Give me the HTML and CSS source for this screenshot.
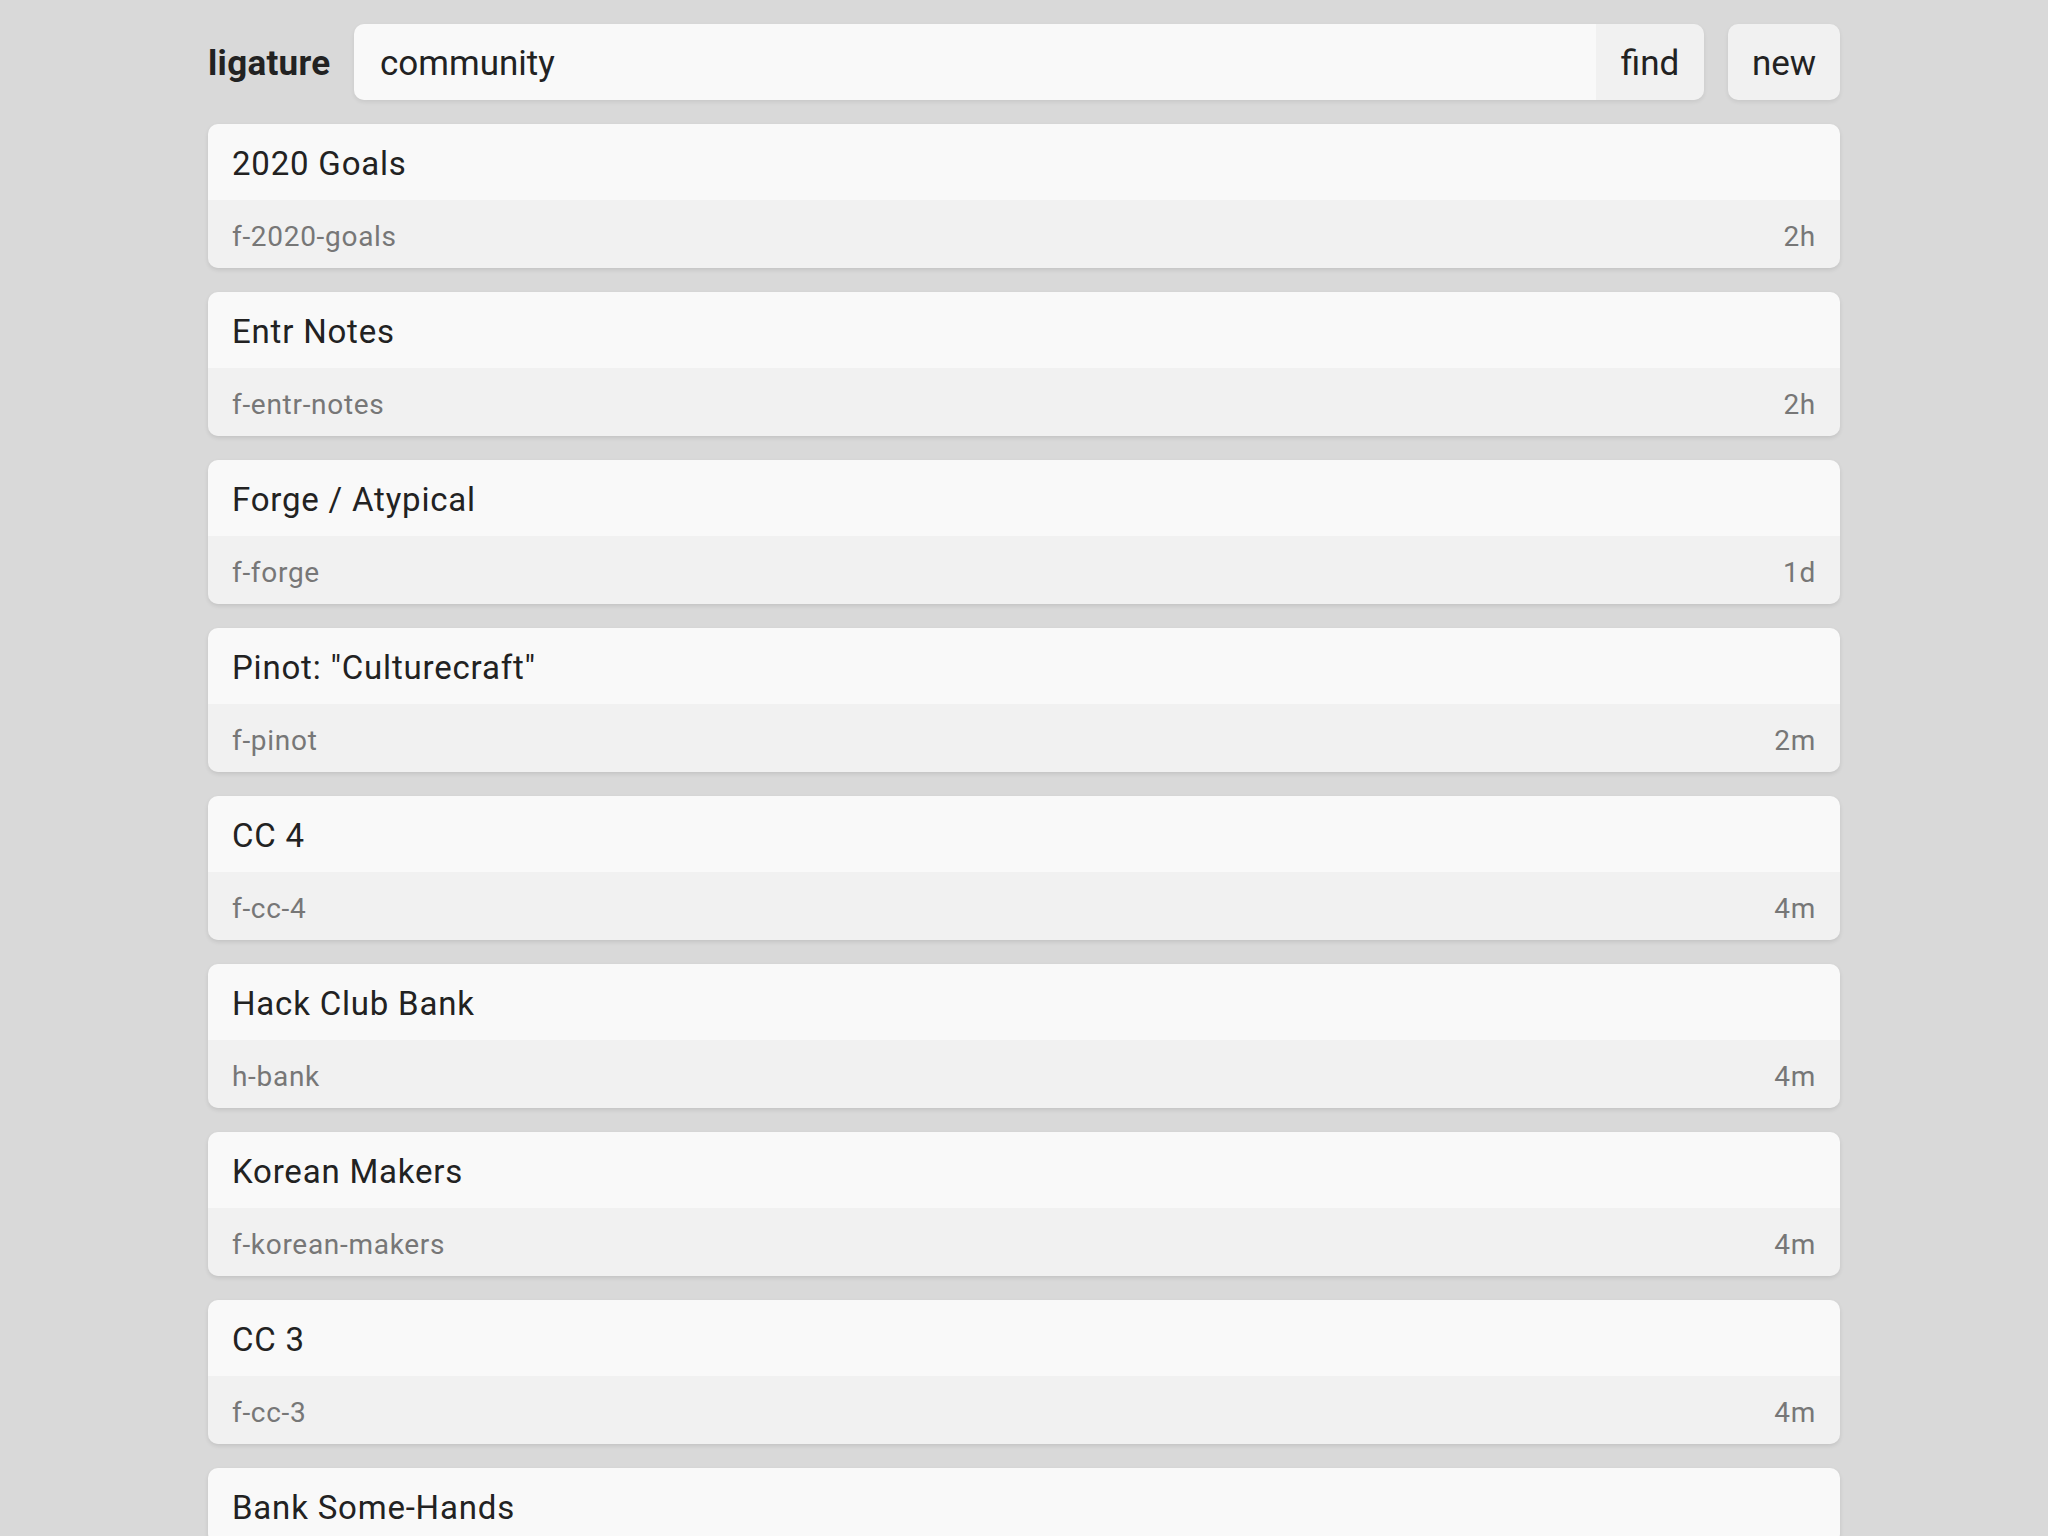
FILE: index.html
```html
<!DOCTYPE html>
<html lang="en">
<head>
<meta charset="utf-8">
<title>ligature</title>
<link rel="stylesheet" href="styles.css">
</head>
<body>
<div class="page">
  <header class="topbar">
    <div class="logo">ligature</div>
    <form class="search">
      <input class="search-input" type="text" value="community">
      <button class="search-btn" type="button">find</button>
    </form>
    <button class="new-btn" type="button">new</button>
  </header>
  <main class="list">
    <a class="card"><div class="card-title">2020 Goals</div><div class="card-meta"><span>f-2020-goals</span><span>2h</span></div></a>
    <a class="card"><div class="card-title">Entr Notes</div><div class="card-meta"><span>f-entr-notes</span><span>2h</span></div></a>
    <a class="card"><div class="card-title">Forge / Atypical</div><div class="card-meta"><span>f-forge</span><span>1d</span></div></a>
    <a class="card"><div class="card-title">Pinot: "Culturecraft"</div><div class="card-meta"><span>f-pinot</span><span>2m</span></div></a>
    <a class="card"><div class="card-title">CC 4</div><div class="card-meta"><span>f-cc-4</span><span>4m</span></div></a>
    <a class="card"><div class="card-title">Hack Club Bank</div><div class="card-meta"><span>h-bank</span><span>4m</span></div></a>
    <a class="card"><div class="card-title">Korean Makers</div><div class="card-meta"><span>f-korean-makers</span><span>4m</span></div></a>
    <a class="card"><div class="card-title">CC 3</div><div class="card-meta"><span>f-cc-3</span><span>4m</span></div></a>
    <a class="card"><div class="card-title">Bank Some-Hands</div></a>
  </main>
</div>
</body>
</html>
```
FILE: styles.css
```css
* { box-sizing: border-box; }
html, body { margin: 0; padding: 0; }
body {
  background: #d9d9d9;
  font-family: Roboto, "Liberation Sans", sans-serif;
  color: #222;
}
.page {
  width: 1632px;
  margin: 0 auto;
  padding-top: 24px;
}
.topbar {
  display: flex;
  align-items: stretch;
  gap: 24px;
  height: 76px;
  margin-bottom: 24px;
}
.logo {
  display: flex;
  align-items: center;
  padding-top: 2px;
  font-weight: 700;
  font-size: 35px;
  letter-spacing: 0.3px;
  color: #222;
  width: 122px;
}
.search {
  flex: 1;
  display: flex;
  margin: 0;
  border-radius: 10px;
  overflow: hidden;
  box-shadow: 0 2px 4px rgba(0,0,0,0.08);
}
.search-input {
  flex: 1;
  border: none;
  outline: none;
  background: #f9f9f9;
  font-family: inherit;
  font-size: 35px;
  color: #222;
  padding: 2px 26px 0;
}
.search-btn, .new-btn {
  border: none;
  background: #f1f1f1;
  font-family: inherit;
  font-size: 35px;
  color: #222;
  padding: 2px 0 0;
  text-align: center;
}
.search-btn { width: 108px; }
.new-btn {
  width: 112px;
  border-radius: 10px;
  box-shadow: 0 2px 4px rgba(0,0,0,0.08);
}
.list {
  display: flex;
  flex-direction: column;
  gap: 24px;
}
.card {
  display: block;
  border-radius: 10px;
  overflow: hidden;
  box-shadow: 0 2px 4px rgba(0,0,0,0.1);
  text-decoration: none;
}
.card-title {
  background: #f9f9f9;
  height: 76px;
  display: flex;
  align-items: center;
  padding: 2px 24px 0;
  font-size: 33px;
  letter-spacing: 0.8px;
  color: #222;
}
.card-meta {
  background: #f1f1f1;
  height: 68px;
  display: flex;
  align-items: center;
  justify-content: space-between;
  padding: 5px 24px 0;
  font-size: 28px;
  letter-spacing: 0.7px;
  color: #777;
}
```
